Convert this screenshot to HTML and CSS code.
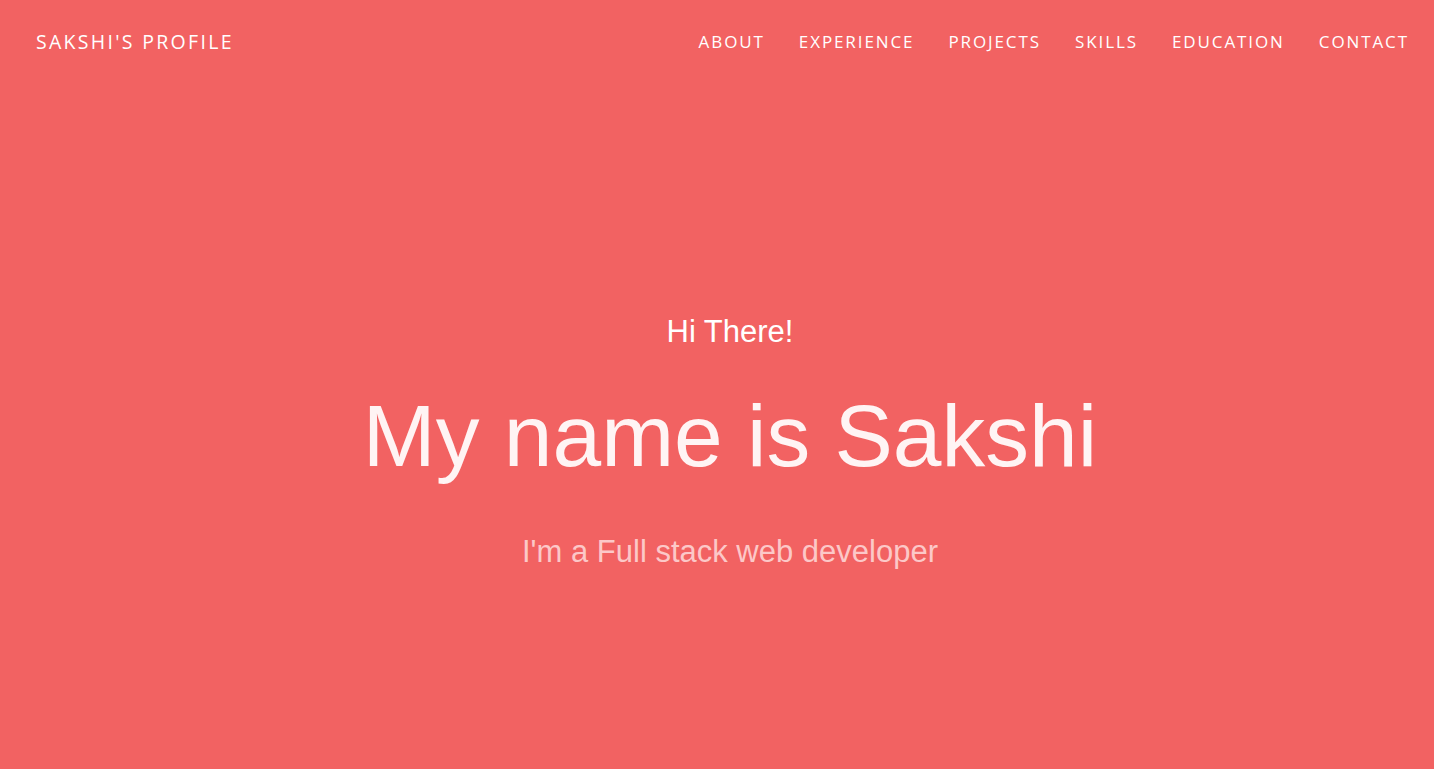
FILE: index.html
```html
<!DOCTYPE html>
<html lang="en">
<head>
<meta charset="utf-8">
<title>Sakshi's Profile</title>
<link rel="stylesheet" href="styles.css">
</head>
<body>
<div class="page">
  <header class="topbar">
    <a class="brand" href="#">SAKSHI'S PROFILE</a>
    <nav class="menu">
      <a href="#">ABOUT</a>
      <a href="#">EXPERIENCE</a>
      <a href="#">PROJECTS</a>
      <a href="#">SKILLS</a>
      <a href="#">EDUCATION</a>
      <a href="#">CONTACT</a>
    </nav>
  </header>
  <main class="hero">
    <p class="hello">Hi There!</p>
    <h1 class="name">My name is Sakshi</h1>
    <p class="role">I'm a Full stack web developer</p>
  </main>
</div>
</body>
</html>
```
FILE: styles.css
```css
html, body {
  margin: 0;
  padding: 0;
  height: 100%;
}
body {
  background: #f26262;
  font-family: "Liberation Sans", Arial, sans-serif;
}
.page {
  min-height: 769px;
  display: flex;
  flex-direction: column;
}
.topbar {
  display: flex;
  justify-content: space-between;
  align-items: center;
  height: 82px;
  padding: 0 25px 0 36px;
}
.brand, .menu a {
  font-family: "Open Sans", sans-serif;
  color: #ffffff;
  text-decoration: none;
}
.brand {
  font-size: 19.5px;
  letter-spacing: 2.3px;
}
.menu {
  display: flex;
  gap: 34px;
}
.menu a {
  font-size: 17px;
  letter-spacing: 1.9px;
}
.hero {
  display: flex;
  flex-direction: column;
  align-items: center;
  padding-left: 26px;
  padding-top: 232px;
}
.hello {
  margin: 0;
  font-size: 31px;
  color: #ffffff;
  line-height: 36px;
}
.name {
  margin: 36px 0 0;
  font-weight: normal;
  font-size: 87.5px;
  line-height: 100px;
  color: #fff4f4;
}
.role {
  margin: 48px 0 0;
  font-size: 31px;
  line-height: 36px;
  color: #fcc8c8;
}
```
